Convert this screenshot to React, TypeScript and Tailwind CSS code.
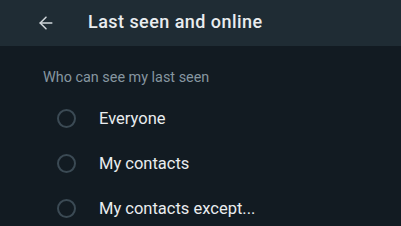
import { ArrowLeft } from "lucide-react"

const OPTIONS = ["Everyone", "My contacts", "My contacts except..."]

export default function App() {
  return (
    <div
      className="w-[401px] h-[226px] overflow-hidden bg-[#121b22]"
      style={{ fontFamily: "Roboto, 'Liberation Sans', sans-serif" }}
    >
      <header className="h-[46px] bg-[#1f2c34] flex items-center">
        <button className="ml-[36px] w-[20px] h-[20px] flex items-center justify-center text-[#d1d7db]">
          <ArrowLeft size={20} strokeWidth={1.8} />
        </button>
        <h1 className="ml-[32px] text-[18px] font-medium tracking-[0.45px] text-[#e9edef] leading-none pb-[2px]">
          Last seen and online
        </h1>
      </header>

      <div className="pl-[43px] pt-[25px] text-[14.4px] text-[#8696a0] leading-none">
        Who can see my last seen
      </div>

      <ul className="mt-[11px]">
        {OPTIONS.map((label) => (
          <li key={label} className="h-[45px] flex items-center">
            <span className="ml-[57px] w-[19px] h-[19px] rounded-full border-2 border-[#3b4a54]" />
            <span className="ml-[23px] text-[16.5px] text-[#e9edef]">{label}</span>
          </li>
        ))}
      </ul>
    </div>
  )
}
